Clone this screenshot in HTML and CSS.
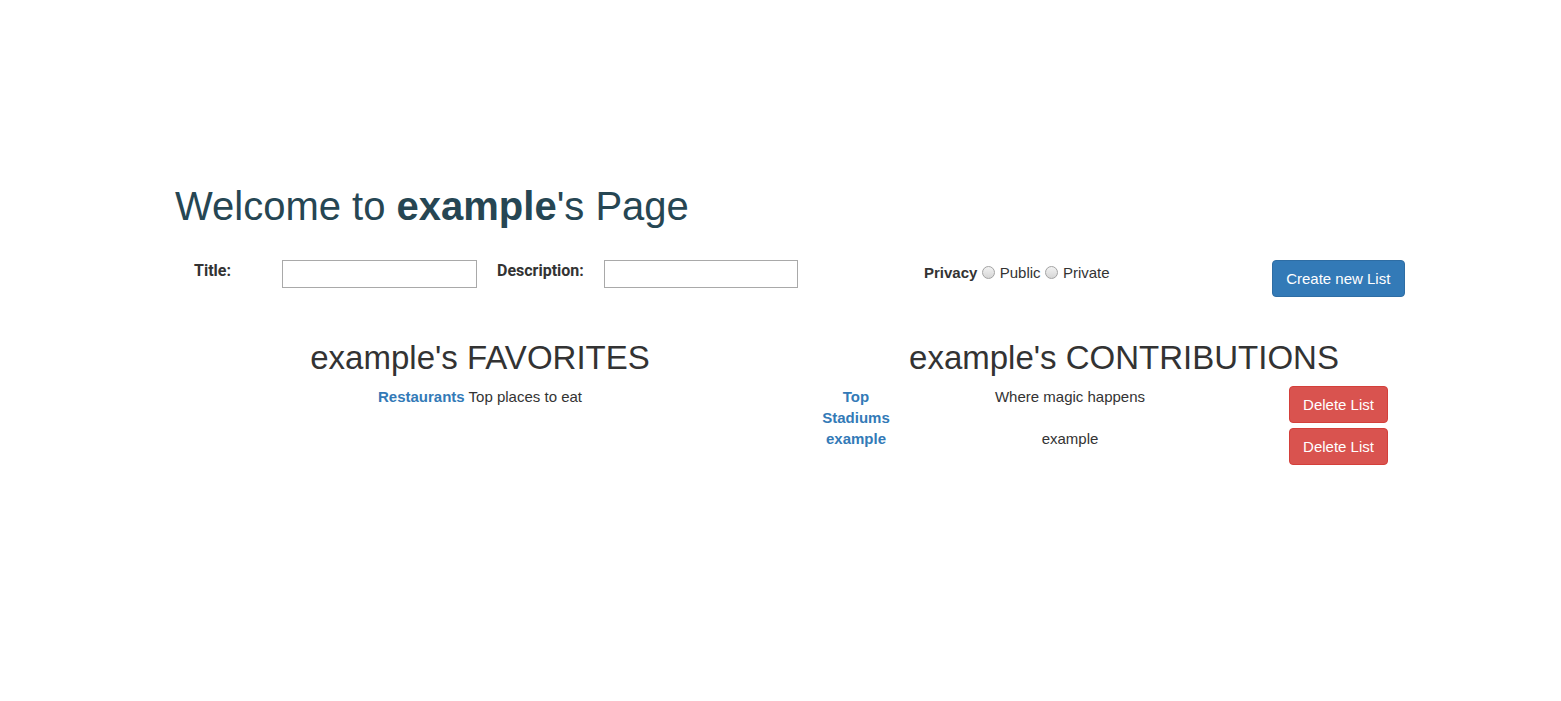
FILE: index.html
```html
<!DOCTYPE html>
<html>
<head>
<meta charset="utf-8">
<title>example's Page</title>
<link rel="stylesheet" href="styles.css">
</head>
<body>
<div class="page">
  <h1 class="welcome">Welcome to <b>example</b>'s Page</h1>
  <form class="new-list">
    <label class="lbl lbl-title">Title:</label>
    <input class="field field-title" type="text">
    <label class="lbl lbl-desc">Description:</label>
    <input class="field field-desc" type="text">
    <div class="privacy"><b>Privacy</b> <input class="radio" type="radio" name="p"> Public <input class="radio" type="radio" name="p"> Private</div>
    <button class="btn btn-primary" type="button">Create new List</button>
  </form>
  <div class="sections">
    <section class="favorites">
      <h2 class="sec-title">example's FAVORITES</h2>
      <p class="fav-item"><a class="link" href="#">Restaurants</a> Top places to eat</p>
    </section>
    <section class="contributions">
      <h2 class="sec-title">example's CONTRIBUTIONS</h2>
      <div class="contrib-table">
        <a class="link cell-name" href="#">Top Stadiums</a>
        <div class="cell-desc">Where magic happens</div>
        <div class="cell-act"><button class="btn btn-danger" type="button">Delete List</button></div>
        <a class="link cell-name" href="#">example</a>
        <div class="cell-desc">example</div>
        <div class="cell-act"><button class="btn btn-danger" type="button">Delete List</button></div>
      </div>
    </section>
  </div>
</div>
</body>
</html>
```

FILE: styles.css
```css
html, body {
  margin: 0;
  padding: 0;
  background: #fff;
}
body {
  font-family: "Liberation Sans", Arial, sans-serif;
  font-size: 15px;
  line-height: 1.4;
  color: #333;
}
.page {
  padding: 184px 0 0 160px;
  width: 1278px;
}
.welcome {
  margin: 0 0 0 15px;
  font-size: 40px;
  font-weight: 400;
  line-height: 44px;
  color: #264653;
}
.welcome b {
  font-weight: 700;
}
.new-list {
  display: flex;
  align-items: flex-start;
  margin-top: 32px;
  padding-left: 34px;
}
.lbl {
  font-family: Roboto, "Liberation Sans", sans-serif;
  font-weight: 700;
  font-size: 16px;
  line-height: 21px;
}
.lbl-title {
  width: 88px;
}
.lbl-desc {
  width: 107px;
  margin-left: 20px;
}
.field {
  box-sizing: border-box;
  height: 28px;
  border: 1px solid #a9a9a9;
  padding: 2px 4px;
  font: inherit;
  margin: 0;
}
.field-title {
  width: 195px;
}
.field-desc {
  width: 194px;
}
.privacy {
  margin-left: 126px;
  margin-top: 2px;
  white-space: nowrap;
}
.radio {
  -webkit-appearance: none;
  appearance: none;
  box-sizing: border-box;
  width: 13px;
  height: 13px;
  margin: 0 1px 0 0;
  border: 1px solid #a3a3a3;
  border-radius: 50%;
  background: linear-gradient(#f2f2f2, #d6d6d6);
  vertical-align: -1px;
}
.btn {
  display: inline-block;
  box-sizing: border-box;
  padding: 7px 13.5px;
  font-family: "Liberation Sans", Arial, sans-serif;
  font-size: 15px;
  line-height: 21px;
  color: #fff;
  border: 1px solid transparent;
  border-radius: 4px;
  cursor: pointer;
}
.btn-primary {
  background: #337ab7;
  border-color: #2e6da4;
  margin-left: 162px;
}
.btn-danger {
  background: #d9534f;
  border-color: #d43f3a;
  padding: 7px 13px;
}
.sections {
  display: flex;
  margin-top: 43px;
}
.sec-title {
  margin: 0 0 10px;
  font-size: 33px;
  font-weight: 400;
  line-height: 36px;
  text-align: center;
}
.favorites {
  width: 640px;
}
.contributions {
  width: 628px;
  margin-left: 10px;
}
.fav-item {
  margin: 0;
  text-align: center;
}
.link {
  color: #337ab7;
  font-weight: 700;
  text-decoration: none;
}
.contrib-table {
  display: grid;
  grid-template-columns: 70px 358px 179px;
  margin-left: 11px;
  align-items: start;
}
.cell-name, .cell-desc, .cell-act {
  text-align: center;
}
```
